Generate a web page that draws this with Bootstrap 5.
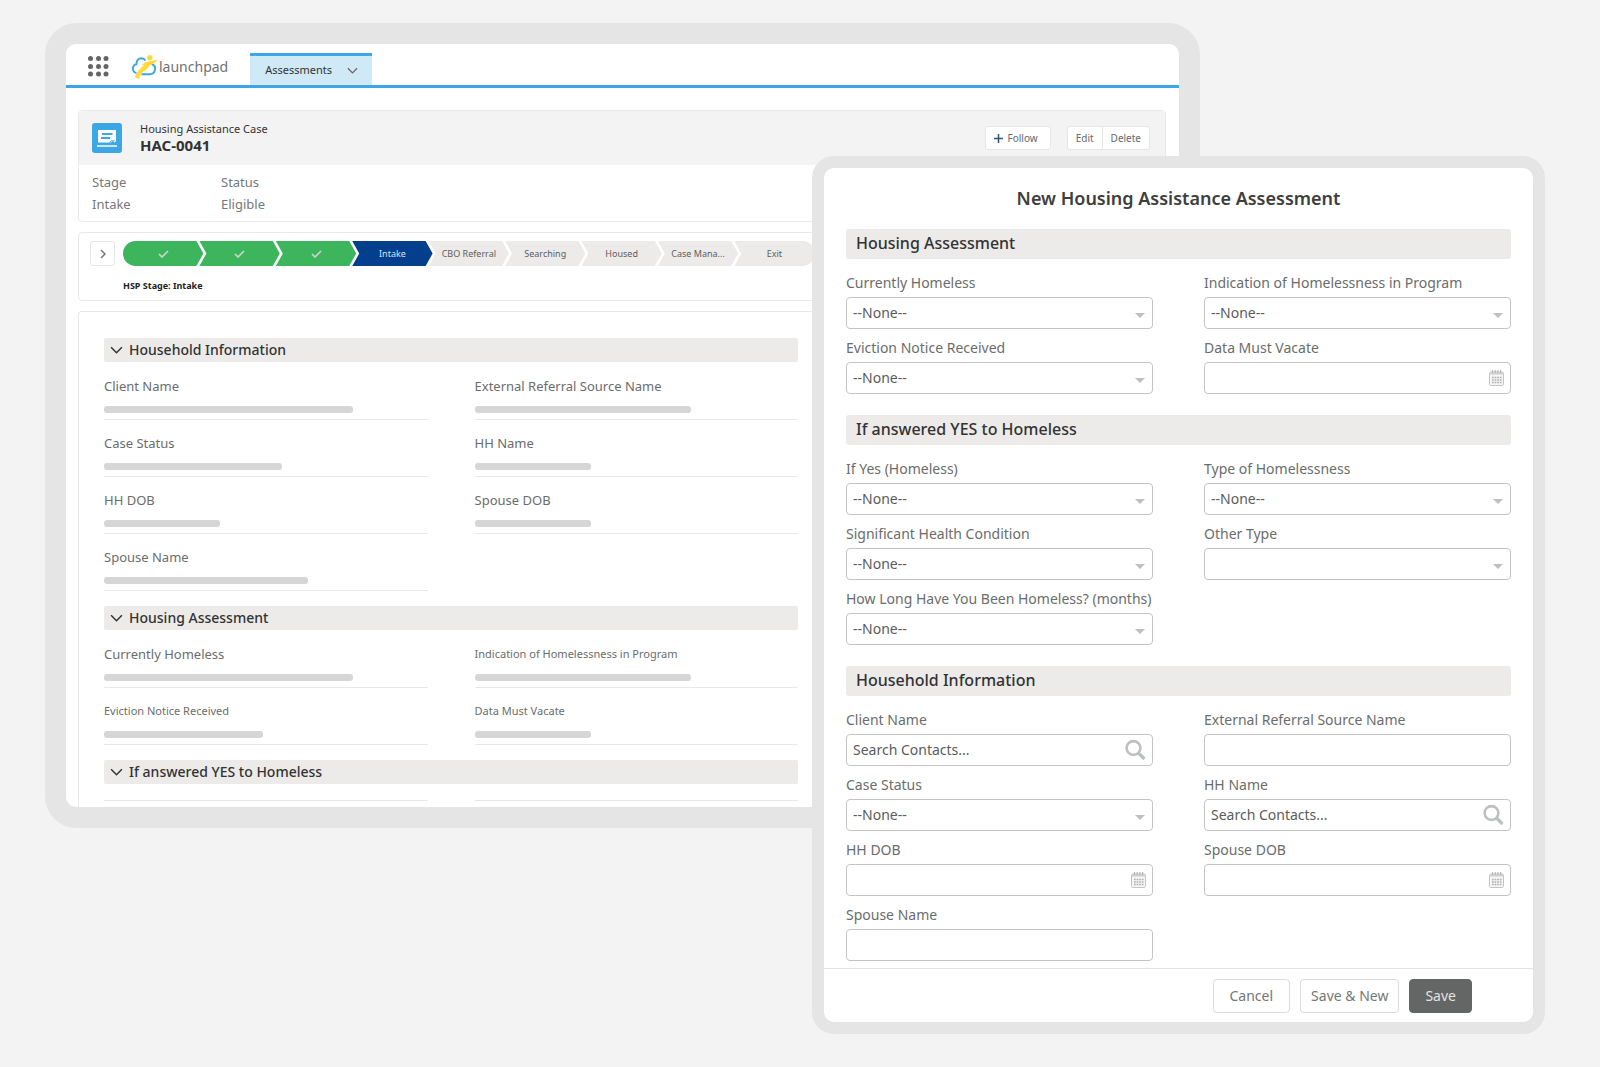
<!DOCTYPE html>
<html lang="en">
<head>
<meta charset="utf-8">
<meta name="viewport" content="width=device-width, initial-scale=1">
<title>Housing Assistance Case HAC-0041</title>
<link href="https://cdn.jsdelivr.net/npm/bootstrap@5.3.0/dist/css/bootstrap.min.css" rel="stylesheet">
<style>
  body { font-family: "Noto Sans", "Open Sans", sans-serif; background: #f3f3f3; color: #3e3e3c; }
  /* Two overlapping windows share the middle grid column */
  .stage { display: grid; grid-template-columns: 767fr 388fr 345fr; align-items: start; padding: 23px 55px 33px 45px; }
  .case-window { grid-area: 1 / 1 / 2 / 3; border: 21px solid #e5e5e5; border-radius: 32px; }
  .case-inner { background: #fff; border-radius: 10px; overflow: hidden; }
  .form-window { grid-area: 1 / 2 / 2 / 4; margin-top: 133px; border: 12px solid #e5e5e5; border-radius: 22px; background: #e5e5e5; z-index: 1; }
  .form-inner { background: #fff; border-radius: 10px; }

  .topbar { height: 44px; border-bottom: 3px solid #3ba7e4; padding: 4px 0 0 22px; }
  .brand-link { margin-left: 23px; gap: 1px; }
  .brand-name { font-size: 14px; line-height: 20px; color: #6f7271; }
  .tab-link { margin-left: 22px; height: 32px; padding: 0 14px 0 15px; gap: 15px; background: #cfe9f7; border-top: 3px solid #3ba7e4; font-size: 11px; color: #333; text-decoration: none; }

  .panel { border: 1px solid #e9e9e9; border-radius: 4px; background: #fff; }
  .panel-stack { padding: 22px 13px 0 12px; gap: 10px; }
  .panel-top { background: #f3f3f3; height: 54px; padding: 0 15px 0 13px; }
  .case-names { margin-left: 18px; padding-bottom: 2px; }
  .case-type { font-size: 11px; line-height: 16px; color: #333; }
  .case-id { font-size: 15px; line-height: 16px; font-weight: 700; color: #333; }
  .btn-mini { font-size: 10px; line-height: 14px; padding: 4px 8px; background: #fff; border: 1px solid #e6e6e6; border-radius: 3px; color: #5f6b72; }
  .btn-mini.roomy { padding: 4px 12px 4px 8px; gap: 5px; }
  .btn-mini:hover { background: #fafafa; border-color: #ddd; }
  .facts { padding: 6px 13px; gap: 73px; font-size: 13px; line-height: 22px; color: #76787a; }
  .facts dt { font-weight: 400; }
  .facts div { min-width: 56px; }

  .path-panel { padding: 8px 11px 7px; }
  .btn-step { width: 25px; height: 25px; padding: 0; border: 1px solid #e6e6e6; border-radius: 3px; }
  .stage-path { width: 65%; height: 25px; margin-left: 8px; border-radius: 13px; overflow: hidden; }
  .stage-path li { flex: 1 1 0; min-width: 0; margin-left: -4px; background: #ecebea; color: #5c5e5d; font-size: 9px;
    clip-path: polygon(0 0, calc(100% - 7px) 0, 100% 50%, calc(100% - 7px) 100%, 0 100%, 7px 50%); }
  .stage-path li:first-child { margin-left: 0; clip-path: polygon(0 0, calc(100% - 7px) 0, 100% 50%, calc(100% - 7px) 100%, 0 100%); }
  .stage-path li:last-child { clip-path: polygon(0 0, 100% 0, 100% 100%, 0 100%, 7px 50%); }
  .stage-path li.done { background: #3cb55c; }
  .stage-path li.now { background: #033f8d; color: #d5e3f3; }
  .path-note { margin: 13px 0 0 33px; font-size: 9px; line-height: 14px; font-weight: 700; color: #222; }

  .detail-panel { padding: 26px 25px 6px; border-bottom: 0; border-radius: 4px 4px 0 0; }
  .detail { width: 67%; }
  .detail-head { height: 24px; margin: 0 0 1px; padding-left: 6px; gap: 6px; background: #ecebea; border-radius: 2px; font-size: 14px; font-weight: 500; color: #333; }
  .detail-grid { display: grid; grid-template-columns: 1fr 1fr; column-gap: 47px; margin-bottom: 15px; }
  .detail-item { height: 57px; padding-top: 14px; border-bottom: 1px solid #e8e8e8; font-size: 13px; line-height: 18px; color: #6b6d6c; }
  .detail-item.compact { font-size: 11px; }
  .detail-blank { height: 16px; border-bottom: 1px solid #e8e8e8; }
  .value-bar { display: block; height: 7px; margin-top: 11px; border-radius: 3px; background: #d6d6d6; }

  .form-title { margin: 0; padding: 17px 0; font-size: 18px; line-height: 27px; font-weight: 600; color: #3e3e3c; text-align: center; }
  .form-area { padding: 0 22px 6px; }
  .form-area fieldset + fieldset { margin-top: 20px; }
  .form-area legend { float: none; height: 30px; margin: 0 0 6px; padding-left: 10px; background: #ecebea; border-radius: 3px; font-size: 16px; line-height: 29px; font-weight: 500; color: #333; }
  .field-grid { display: grid; grid-template-columns: 1fr 1fr; column-gap: 51px; }
  .field-grid > div { min-width: 0; padding-bottom: 1px; }
  .field-label { display: block; padding: 8px 0 4px; font-size: 14px; line-height: 20px; color: #6b6d6c; white-space: nowrap; }
  .field-box { height: 32px; padding: 0 30px 2px 6px; border: 1px solid #c4c4c4; border-radius: 4px; font-size: 14px; line-height: 20px; color: #5a5c5b; }
  .field-box::placeholder { color: #5a5c5b; opacity: 1; }
  select.field-box { padding-bottom: 0; background-image: url("data:image/svg+xml,%3Csvg xmlns='http://www.w3.org/2000/svg' viewBox='0 0 10 5'%3E%3Cpath d='M0 0h10L5 5z' fill='%23bcc0bf'/%3E%3C/svg%3E"); background-size: 10px 5px; background-position: right 7px top 15px; }
  .field-icon { position: absolute; right: 7px; top: 50%; transform: translateY(-50%); pointer-events: none; }
  .form-foot { height: 54px; padding: 0 61px 0 0; gap: 10px; border-top: 1px solid #e2e2e2; }
  .btn-foot { height: 34px; padding: 0 16px; border: 1px solid #dcdcdc; border-radius: 4px; font-size: 14px; color: #757776; background: #fff; }
  .btn-foot.tight { padding: 0 10px; }
  .btn-foot.solid { padding: 0 15px; background: #646665; border-color: #646665; color: #e3e3e3; }
</style>
<script src="https://cdn.jsdelivr.net/npm/bootstrap@5.3.0/dist/js/bootstrap.bundle.min.js"></script>
</head>
<body>
<svg class="d-none" aria-hidden="true">
  <symbol id="chevron" viewBox="0 0 12 8"><path d="M1 1l5 5 5-5" fill="none" stroke="currentColor" stroke-width="1.4"/></symbol>
  <symbol id="tick" viewBox="0 0 11 8"><path d="M1 4l3 3 6-6" fill="none" stroke="#c6d6ca" stroke-width="1.7"/></symbol>
  <symbol id="magnifier" viewBox="0 0 21 21"><circle cx="8.5" cy="8.5" r="6.9" fill="none" stroke="#bcc0bf" stroke-width="2.6"/><path d="M13.5 13.5l6 6" stroke="#bcc0bf" stroke-width="3.2"/></symbol>
  <symbol id="calendar" viewBox="0 0 15 16"><path d="M2 2h11a1.5 1.5 0 0 1 1.5 1.5v11A1.5 1.5 0 0 1 13 15.500H2A1.500 1.500 0 0 1 .5 14.500v-11A1.500 1.500 0 0 1 2 2z" fill="#f6f6f6" stroke="#c4c4c4"/><path d="M1 3.500h13" stroke="#cfcfcf" stroke-width="2"/><path d="M3.500 0v3M6.200 0v3M8.900 0v3M11.600 0v3" stroke="#b5b5b5" stroke-width="1.200"/><path d="M3 7.500h9.500M3 10h9.500M3 12.500h9.500" stroke="#b0b0b0" stroke-width="1.600" stroke-dasharray="1.700 .9"/></symbol>
</svg>

<main class="stage">
  <section class="case-window">
    <div class="case-inner">
      <nav class="topbar d-flex align-items-end">
        <button type="button" class="btn p-0 border-0 d-flex align-self-center" aria-label="App launcher">
          <svg width="21" height="21" viewBox="0 0 21 21" fill="#646665"><circle cx="2.500" cy="2.500" r="2.500"/><circle cx="10.500" cy="2.500" r="2.500"/><circle cx="18" cy="2.500" r="2.500"/><circle cx="2.500" cy="10.500" r="2.500"/><circle cx="10.500" cy="10.500" r="2.500"/><circle cx="18" cy="10.500" r="2.500"/><circle cx="2.500" cy="18" r="2.500"/><circle cx="10.500" cy="18" r="2.500"/><circle cx="18" cy="18" r="2.500"/></svg>
        </button>
        <a href="#" class="brand-link d-flex align-items-center align-self-center text-decoration-none">
          <svg width="26" height="24" viewBox="0 0 26 24" aria-hidden="true"><path d="M4.500 18.200C2.200 17.600.9 16 .9 13.700c0-2.500 1.600-4.200 3.600-4.600C4.300 5.600 6.500 3.300 9.300 3.200c1.900 0 3.200.8 4.200 2.300M19.600 9.200c2.600.8 3.800 2.500 3.500 4.900-.3 3-2.600 5.100-5.600 5.100H9.500" fill="none" stroke="#3ba7e4" stroke-width="1.900"/><circle cx="17.800" cy="2.800" r="2.700" fill="#ffd93b"/><path d="M26 4.600c-2.200 3.200-5 4.600-8.600 5.600-1.200 3-3.300 4.600-6.400 6.600-2 1.700-3 3.900-4 7.200L3 22c1.300-3.600 3-6 5-8 1.500-1.700 2.900-2.900 4.500-4.300-1.500.2-2.400.7-3.600 1.500C11 8 14 6.500 17.500 6.200c3-.2 5.700-.6 8.500-1.600z" fill="#ffd93b"/></svg>
          <span class="brand-name">launchpad</span>
        </a>
        <a href="#" class="tab-link d-flex align-items-center">Assessments
          <svg width="11" height="8" style="color:#666"><use href="#chevron"/></svg></a>
      </nav>

      <div class="panel-stack d-flex flex-column">
        <header class="panel">
          <div class="panel-top d-flex align-items-center">
            <svg width="30" height="30" viewBox="0 0 30 30" aria-hidden="true"><rect width="30" height="30" rx="3" fill="#3ba7e4"/><path d="M6 7h18v11l-1.500 1.500-1.500-1.500-2 1.500H6z" fill="#fff"/><path d="M10 11h10.500M9 15h9" stroke="#3ba7e4" stroke-width="1.800"/><path d="M17.500 19.500l1.500-1.800 2 .5 1.500-.8" stroke="#3ba7e4" fill="none"/><path d="M5 23h20" stroke="#fff" stroke-width="1.500"/></svg>
            <div class="case-names">
              <div class="case-type">Housing Assistance Case</div>
              <h1 class="case-id m-0">HAC-0041</h1>
            </div>
            <div class="ms-auto d-flex gap-3">
              <button type="button" class="btn btn-mini roomy d-flex align-items-center"><svg width="9" height="9" viewBox="0 0 9 9"><path d="M4.500 0v9M0 4.500h9" stroke="#2d5673" stroke-width="1.500"/></svg>Follow</button>
              <div class="btn-group">
                <button type="button" class="btn btn-mini">Edit</button>
                <button type="button" class="btn btn-mini">Delete</button>
              </div>
            </div>
          </div>
          <dl class="facts d-flex m-0">
            <div><dt>Stage</dt><dd class="m-0">Intake</dd></div>
            <div><dt>Status</dt><dd class="m-0">Eligible</dd></div>
          </dl>
        </header>

        <section class="panel path-panel">
          <div class="d-flex">
            <button type="button" class="btn btn-step" aria-label="Show stages"><svg class="d-block mx-auto" width="6" height="10" viewBox="0 0 6 10"><path d="M1 1l4 4-4 4" fill="none" stroke="#777" stroke-width="1.500"/></svg></button>
            <ol class="stage-path d-flex list-unstyled mb-0">
              <li class="done d-flex align-items-center justify-content-center"><svg width="11" height="8"><use href="#tick"/></svg></li>
              <li class="done d-flex align-items-center justify-content-center"><svg width="11" height="8"><use href="#tick"/></svg></li>
              <li class="done d-flex align-items-center justify-content-center"><svg width="11" height="8"><use href="#tick"/></svg></li>
              <li class="now d-flex align-items-center justify-content-center">Intake</li>
              <li class="d-flex align-items-center justify-content-center">CBO Referral</li>
              <li class="d-flex align-items-center justify-content-center">Searching</li>
              <li class="d-flex align-items-center justify-content-center">Housed</li>
              <li class="d-flex align-items-center justify-content-center">Case Mana...</li>
              <li class="d-flex align-items-center justify-content-center">Exit</li>
            </ol>
          </div>
          <p class="path-note">HSP Stage: Intake</p>
        </section>

        <section class="panel detail-panel">
          <div class="detail">
            <h2 class="detail-head d-flex align-items-center"><svg width="13" height="9"><use href="#chevron"/></svg>Household Information</h2>
            <div class="detail-grid">
              <div class="detail-item">Client Name<span class="value-bar" style="width:77%"></span></div>
              <div class="detail-item">External Referral Source Name<span class="value-bar" style="width:67%"></span></div>
              <div class="detail-item">Case Status<span class="value-bar" style="width:55%"></span></div>
              <div class="detail-item">HH Name<span class="value-bar" style="width:36%"></span></div>
              <div class="detail-item">HH DOB<span class="value-bar" style="width:36%"></span></div>
              <div class="detail-item">Spouse DOB<span class="value-bar" style="width:36%"></span></div>
              <div class="detail-item">Spouse Name<span class="value-bar" style="width:63%"></span></div>
            </div>
            <h2 class="detail-head d-flex align-items-center"><svg width="13" height="9"><use href="#chevron"/></svg>Housing Assessment</h2>
            <div class="detail-grid">
              <div class="detail-item">Currently Homeless<span class="value-bar" style="width:77%"></span></div>
              <div class="detail-item compact">Indication of Homelessness in Program<span class="value-bar" style="width:67%"></span></div>
              <div class="detail-item compact">Eviction Notice Received<span class="value-bar" style="width:49%"></span></div>
              <div class="detail-item compact">Data Must Vacate<span class="value-bar" style="width:36%"></span></div>
            </div>
            <h2 class="detail-head d-flex align-items-center"><svg width="13" height="9"><use href="#chevron"/></svg>If answered YES to Homeless</h2>
            <div class="detail-grid mb-0">
              <div class="detail-blank"></div>
              <div class="detail-blank"></div>
            </div>
          </div>
        </section>
      </div>
    </div>
  </section>

  <section class="form-window" role="dialog" aria-labelledby="form-title">
    <form class="form-inner">
      <h2 class="form-title" id="form-title">New Housing Assistance Assessment</h2>
      <div class="form-area">
        <fieldset>
          <legend>Housing Assessment</legend>
          <div class="field-grid">
            <div><label class="field-label" for="f1">Currently Homeless</label><select class="form-select field-box" id="f1"><option>--None--</option></select></div>
            <div><label class="field-label" for="f2">Indication of Homelessness in Program</label><select class="form-select field-box" id="f2"><option>--None--</option></select></div>
            <div><label class="field-label" for="f3">Eviction Notice Received</label><select class="form-select field-box" id="f3"><option>--None--</option></select></div>
            <div><label class="field-label" for="f4">Data Must Vacate</label><div class="position-relative"><input type="text" class="form-control field-box" id="f4"><svg class="field-icon" width="15" height="16"><use href="#calendar"/></svg></div></div>
          </div>
        </fieldset>
        <fieldset>
          <legend>If answered YES to Homeless</legend>
          <div class="field-grid">
            <div><label class="field-label" for="f5">If Yes (Homeless)</label><select class="form-select field-box" id="f5"><option>--None--</option></select></div>
            <div><label class="field-label" for="f6">Type of Homelessness</label><select class="form-select field-box" id="f6"><option>--None--</option></select></div>
            <div><label class="field-label" for="f7">Significant Health Condition</label><select class="form-select field-box" id="f7"><option>--None--</option></select></div>
            <div><label class="field-label" for="f8">Other Type</label><select class="form-select field-box" id="f8"><option></option></select></div>
            <div><label class="field-label" for="f9">How Long Have You Been Homeless? (months)</label><select class="form-select field-box" id="f9"><option>--None--</option></select></div>
          </div>
        </fieldset>
        <fieldset>
          <legend>Household Information</legend>
          <div class="field-grid">
            <div><label class="field-label" for="f10">Client Name</label><div class="position-relative"><input type="text" class="form-control field-box" id="f10" placeholder="Search Contacts..."><svg class="field-icon" width="21" height="21"><use href="#magnifier"/></svg></div></div>
            <div><label class="field-label" for="f11">External Referral Source Name</label><input type="text" class="form-control field-box" id="f11"></div>
            <div><label class="field-label" for="f12">Case Status</label><select class="form-select field-box" id="f12"><option>--None--</option></select></div>
            <div><label class="field-label" for="f13">HH Name</label><div class="position-relative"><input type="text" class="form-control field-box" id="f13" placeholder="Search Contacts..."><svg class="field-icon" width="21" height="21"><use href="#magnifier"/></svg></div></div>
            <div><label class="field-label" for="f14">HH DOB</label><div class="position-relative"><input type="text" class="form-control field-box" id="f14"><svg class="field-icon" width="15" height="16"><use href="#calendar"/></svg></div></div>
            <div><label class="field-label" for="f15">Spouse DOB</label><div class="position-relative"><input type="text" class="form-control field-box" id="f15"><svg class="field-icon" width="15" height="16"><use href="#calendar"/></svg></div></div>
            <div><label class="field-label" for="f16">Spouse Name</label><input type="text" class="form-control field-box" id="f16"></div>
          </div>
        </fieldset>
      </div>
      <div class="form-foot d-flex align-items-center justify-content-end">
        <button type="button" class="btn btn-foot">Cancel</button>
        <button type="button" class="btn btn-foot tight">Save &amp; New</button>
        <button type="button" class="btn btn-foot solid">Save</button>
      </div>
    </form>
  </section>
</main>
</body>
</html>
